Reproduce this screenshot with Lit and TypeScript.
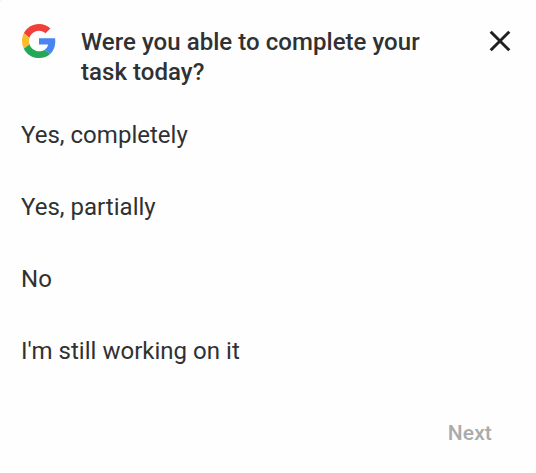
import { LitElement, html, css } from "lit";
import { customElement } from "lit/decorators.js";

@customElement("app-root")
export class AppRoot extends LitElement {
  static styles = css`
    :host { display: block; background: #f4f4f4; font-family: Roboto, "Liberation Sans", sans-serif; color: #303133; }
    .survey { box-sizing: border-box; width: 536px; height: 473px; background: #fefefe; display: flex; flex-direction: column; border-top-left-radius: 4px; }
    .header { box-sizing: border-box; display: flex; align-items: flex-start; padding: 24px 24px 0 22px; height: 99px; }
    .logo { width: 34px; height: 34px; flex: none; }
    .title { margin: 3px 0 0 25px; width: 370px; font-size: 24px; line-height: 30px; font-weight: 500; letter-spacing: 0.05px; }
    .close { margin-left: auto; border: 0; padding: 0; background: none; width: 24px; height: 34px; display: flex; align-items: center; }
    .options { list-style: none; margin: 0; padding: 0 21px; }
    .option { height: 72px; display: flex; align-items: center; font-size: 24px; letter-spacing: 0.02px; }
    .footer { margin-top: auto; display: flex; justify-content: flex-end; padding: 0 44px 28px 0; }
    .next { border: 0; padding: 0; background: none; font: 500 21px/24px Roboto, sans-serif; letter-spacing: 0.15px; color: #ababab; }
  `;
  render() {
    return html`
      <section class="survey">
        <header class="header">
          <svg class="logo" viewBox="0 0 48 48" aria-hidden="true">
            <path fill="#F04039" d="M24 9.5c3.54 0 6.71 1.22 9.21 3.6l6.85-6.85C35.9 2.38 30.47 0 24 0 14.62 0 6.51 5.38 2.56 13.22l7.98 6.19C12.43 13.72 17.74 9.5 24 9.5z"/>
            <path fill="#4A84F1" d="M46.98 24.55c0-1.57-.15-3.09-.38-4.55H24v9.02h12.94c-.58 2.96-2.26 5.48-4.78 7.18l7.73 6c4.51-4.18 7.09-10.36 7.09-17.65z"/>
            <path fill="#FBBC2C" d="M10.53 28.59c-.48-1.45-.76-2.99-.76-4.59s.27-3.14.76-4.59l-7.98-6.19C.92 16.46 0 20.12 0 24c0 3.88.92 7.54 2.56 10.78l7.97-6.19z"/>
            <path fill="#24A857" d="M24 48c6.48 0 11.93-2.13 15.89-5.81l-7.73-6c-2.15 1.45-4.92 2.3-8.16 2.3-6.26 0-11.57-4.22-13.47-9.91l-7.98 6.19C6.51 42.62 14.62 48 24 48z"/>
          </svg>
          <div class="title">Were you able to complete your task today?</div>
          <button class="close" aria-label="Close">
            <svg width="24" height="24" viewBox="0 0 24 24"><path d="M2.7 2.7 21.3 21.3M21.3 2.7 2.7 21.3" fill="none" stroke="#202020" stroke-width="3"/></svg>
          </button>
        </header>
        <ul class="options">
          ${["Yes, completely", "Yes, partially", "No", "I'm still working on it"].map((t) => html`<li class="option">${t}</li>`)}
        </ul>
        <footer class="footer"><button class="next">Next</button></footer>
      </section>`;
  }
}
